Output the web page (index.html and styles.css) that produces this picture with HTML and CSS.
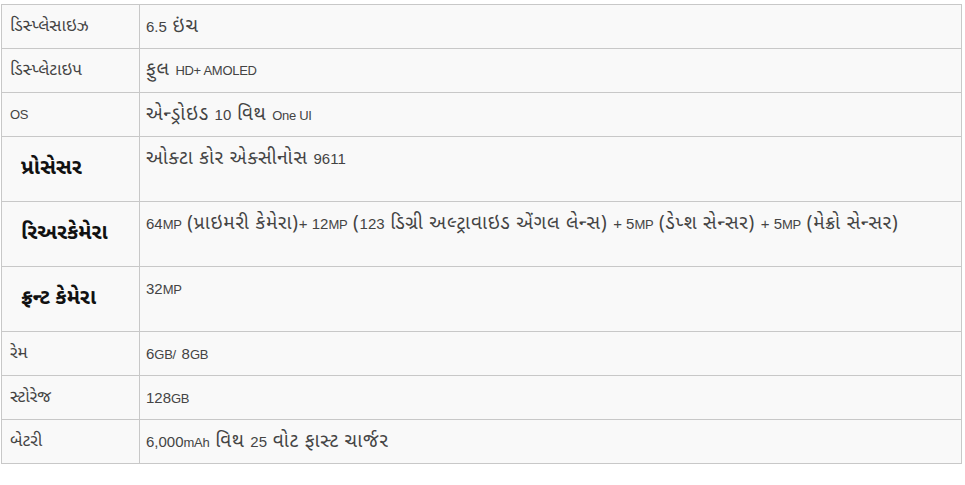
FILE: index.html
```html
<!DOCTYPE html>
<html lang="gu">
<head>
  <meta charset="UTF-8">
  <meta name="viewport" content="width=device-width, initial-scale=1.0">
  <title>સ્પેસિફિકેશન</title>
  <link rel="stylesheet" href="styles.css">
</head>
<body>
  <div class="wrap">
    <table class="spec-table">
      <tbody>
        <tr>
          <td class="label">ડિસ્પ્લેસાઇઝ</td>
          <td class="value"><span class="num">6.5</span> ઇંચ</td>
        </tr>
        <tr>
          <td class="label">ડિસ્પ્લેટાઇપ</td>
          <td class="value">ફુલ <span class="latin">HD+ AMOLED</span></td>
        </tr>
        <tr>
          <td class="label"><span class="latin">OS</span></td>
          <td class="value">એન્ડ્રોઇડ <span class="num">10</span> વિથ <span class="latin">One UI</span></td>
        </tr>
        <tr class="tall">
          <td class="label"><strong class="head">પ્રોસેસર</strong></td>
          <td class="value">ઓક્ટા કોર એક્સીનોસ <span class="num">9611</span></td>
        </tr>
        <tr class="tall">
          <td class="label"><strong class="head">રિઅરકેમેરા</strong></td>
          <td class="value"><span class="num">64</span><span class="latin">MP</span> (પ્રાઇમરી કેમેરા)<span class="num">+ 12</span><span class="latin">MP</span> (<span class="num">123</span> ડિગ્રી અલ્ટ્રાવાઇડ એંગલ લેન્સ) <span class="num">+ 5</span><span class="latin">MP</span> (ડેપ્શ સેન્સર) <span class="num">+ 5</span><span class="latin">MP</span> (મેક્રો સેન્સર)</td>
        </tr>
        <tr class="tall">
          <td class="label"><strong class="head">ફ્રન્ટ કેમેરા</strong></td>
          <td class="value"><span class="num">32</span><span class="latin">MP</span></td>
        </tr>
        <tr>
          <td class="label">રેમ</td>
          <td class="value"><span class="num">6</span><span class="latin">GB/</span> <span class="num">8</span><span class="latin">GB</span></td>
        </tr>
        <tr>
          <td class="label">સ્ટોરેજ</td>
          <td class="value"><span class="num">128</span><span class="latin">GB</span></td>
        </tr>
        <tr>
          <td class="label">બેટરી</td>
          <td class="value"><span class="num">6,000</span><span class="latin">mAh</span> વિથ <span class="num">25</span> વોટ ફાસ્ટ ચાર્જર</td>
        </tr>
      </tbody>
    </table>
  </div>
</body>
</html>
```

FILE: styles.css
```css
* {
  margin: 0;
  padding: 0;
  box-sizing: border-box;
}
body {
  font-family: "Noto Sans Gujarati", "Liberation Sans", sans-serif;
  background-color: #fff;
  color: #444;
}
.wrap {
  padding: 4px 0 0 1px;
}
.spec-table {
  width: 961px;
  border-collapse: collapse;
  background-color: #f9f9f9;
  font-size: 17px;
  line-height: 20px;
}
.spec-table td {
  border: 1px solid #c8c8c8;
  height: 44px;
}
.spec-table .tall td {
  height: 65px;
}
.label {
  width: 138px;
  padding-left: 8px;
  vertical-align: middle;
}
.value {
  padding: 12px 6px 0;
  vertical-align: top;
  font-size: 19px;
  letter-spacing: 0.8px;
}
.num {
  font-family: "Liberation Sans", sans-serif;
  font-size: 15px;
  letter-spacing: 0;
}
.latin {
  font-family: "Liberation Sans", sans-serif;
  font-size: 13px;
  letter-spacing: -0.3px;
}
.head {
  display: block;
  padding-left: 11px;
  font-size: 21px;
  font-weight: bold;
  color: #111;
}
```
